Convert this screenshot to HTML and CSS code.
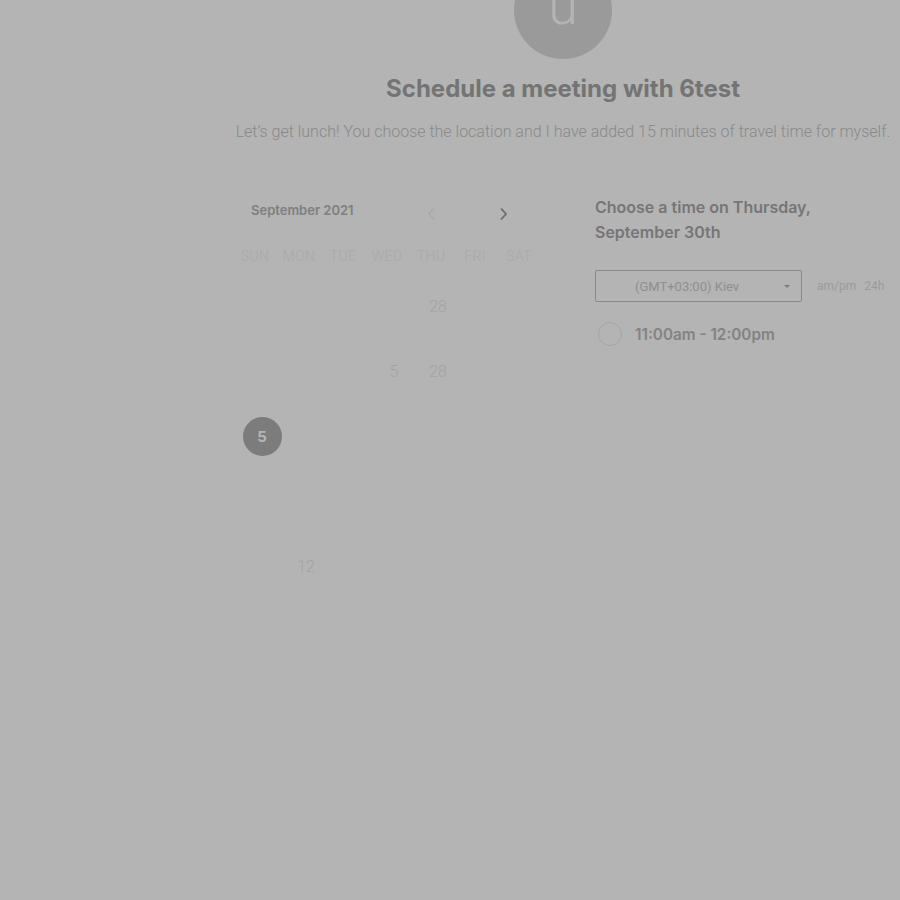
FILE: index.html
```html
<!DOCTYPE html>
<html lang="en">
<head>
<meta charset="utf-8">
<title>Schedule a meeting with 6test</title>
<link rel="stylesheet" href="styles.css">
</head>
<body>
<div class="page">
  <div class="avatar-wrap"><div class="avatar">u</div></div>
  <h1 class="title">Schedule a meeting with 6test</h1>
  <p class="desc">Let’s get lunch! You choose the location and I have added 15 minutes of travel time for myself.</p>

  <div class="booking">
    <div class="calendar">
      <div class="cal-head">
        <span class="month">September 2021</span>
        <span class="nav prev"><svg width="9" height="14" viewBox="0 0 9 14"><path d="M7 1.5 2 7l5 5.5" fill="none" stroke="currentColor" stroke-width="1.6"/></svg></span>
        <span class="nav next"><svg width="9" height="14" viewBox="0 0 9 14"><path d="M2 1.5 7 7l-5 5.5" fill="none" stroke="currentColor" stroke-width="1.8"/></svg></span>
      </div>
      <div class="weekdays">
        <span>Sun</span><span>Mon</span><span>Tue</span><span>Wed</span><span>Thu</span><span>Fri</span><span>Sat</span>
      </div>
      <div class="days">
        <span></span><span class="dot">·</span><span></span><span class="dash">-</span><span>28</span><span class="dot">·</span><span class="dot">·</span>
        <span></span><span class="dot">·</span><span></span><span>5</span><span>28</span><span></span><span class="dot">·</span>
        <span class="selected">5</span><span></span><span></span><span></span><span></span><span></span><span></span>
        <span></span><span></span><span></span><span></span><span></span><span></span><span></span>
        <span></span><span>12</span><span></span><span></span><span></span><span></span><span></span>
      </div>
    </div>

    <div class="times">
      <h2 class="times-title">Choose a time on Thursday, September 30th</h2>
      <div class="tz-row">
        <div class="tz-select"><span>(GMT+03:00) Kiev</span><span class="caret"></span></div>
        <div class="fmt"><span>am/pm</span><span>24h</span></div>
      </div>
      <div class="slot"><span class="radio"></span><span class="slot-text">11:00am - 12:00pm</span></div>
    </div>
  </div>
</div>
<div class="overlay"></div>
</body>
</html>
```

FILE: styles.css
```css
html, body {
  margin: 0;
  padding: 0;
  background: #ffffff;
  overflow: hidden;
}
body {
  font-family: "Roboto", "Liberation Sans", sans-serif;
  height: 900px;
}
.page {
  margin-left: 226px;
  width: 674px;
}
.avatar-wrap {
  display: flex;
  justify-content: center;
  margin-top: -39px;
}
.avatar {
  width: 98px;
  height: 98px;
  border-radius: 50%;
  background: #dadada;
  color: #ffffff;
  display: flex;
  align-items: center;
  justify-content: center;
  font-family: "Roboto", sans-serif;
  font-weight: 300;
  font-size: 54px;
  line-height: 1;
  padding-bottom: 8px;
  box-sizing: border-box;
}
.title {
  margin: 14px 0 0;
  text-align: center;
  font-family: "Inter", sans-serif;
  font-weight: 700;
  font-size: 24px;
  line-height: 32px;
  color: #a5a5a5;
}
.desc {
  margin: 17px 0 0;
  text-align: center;
  font-family: "Roboto", sans-serif;
  font-weight: 300;
  font-size: 16px;
  line-height: 20px;
  color: #c4c4c4;
  white-space: nowrap;
}
.booking {
  display: flex;
  margin-top: 53px;
  gap: 47px;
  padding-left: 7px;
}
.calendar {
  width: 315px;
}
.cal-head {
  display: flex;
  align-items: center;
  height: 30px;
  padding-left: 18px;
}
.month {
  font-family: "Inter", sans-serif;
  font-weight: 600;
  font-size: 13px;
  color: #b4b4b4;
  width: 176px;
}
.nav {
  display: flex;
  margin-top: 8px;
}
.prev { color: #f0f0f0; }
.next { color: #9a9a9a; margin-left: 63px; }
.weekdays {
  display: grid;
  grid-template-columns: repeat(7, 44px);
  margin-top: 21px;
  height: 20px;
  line-height: 20px;
}
.weekdays span {
  text-align: center;
  text-transform: uppercase;
  font-weight: 300;
  font-size: 14px;
  color: #f1f1f1;
  letter-spacing: 0.3px;
}
.days {
  display: grid;
  grid-template-columns: repeat(7, 44px);
  grid-auto-rows: 65px;
  margin-top: 8px;
  padding-left: 7px;
}
.days span {
  display: flex;
  align-items: center;
  justify-content: center;
  font-weight: 300;
  font-size: 16px;
  color: #e8e8e8;
}
.days .dot { color: #f6f6f6; font-size: 12px; }
.days .dash { color: #f6f6f6; font-size: 10px; align-items: flex-start; padding-top: 20px; }
.days .selected {
  width: 39px;
  height: 39px;
  margin: auto;
  border-radius: 50%;
  background: #b0b0b0;
  color: #ffffff;
  font-family: "Inter", sans-serif;
  font-weight: 700;
  font-size: 15px;
}
.times {
  width: 305px;
}
.times-title {
  margin: 0;
  max-width: 250px;
  font-family: "Inter", sans-serif;
  font-weight: 600;
  font-size: 16px;
  line-height: 25px;
  color: #a8a8a8;
}
.tz-row {
  display: flex;
  align-items: center;
  margin-top: 25px;
}
.tz-select {
  width: 207px;
  height: 32px;
  box-sizing: border-box;
  border: 1px solid #c2c2c2;
  border-radius: 2px;
  display: flex;
  align-items: center;
  padding-left: 39px;
  padding-right: 11px;
  font-size: 13px;
  font-weight: 400;
  color: #cbcbcb;
}
.tz-select span:first-child { flex: 1; }
.caret {
  width: 0;
  height: 0;
  border-left: 3px solid transparent;
  border-right: 3px solid transparent;
  border-top: 3px solid #b0b0b0;
}
.fmt {
  display: flex;
  gap: 8px;
  margin-left: 15px;
  font-size: 12px;
  color: #dcdcdc;
}
.slot {
  display: flex;
  align-items: center;
  margin-top: 20px;
  height: 24px;
  padding-left: 3px;
  gap: 13px;
}
.radio {
  width: 24px;
  height: 24px;
  box-sizing: border-box;
  border-radius: 50%;
  border: 1px solid #ebebeb;
}
.slot-text {
  font-family: "Inter", sans-serif;
  font-weight: 600;
  font-size: 15.3px;
  color: #bababa;
}
.overlay {
  position: fixed;
  inset: 0;
  background: rgba(0, 0, 0, 0.295);
}
```
